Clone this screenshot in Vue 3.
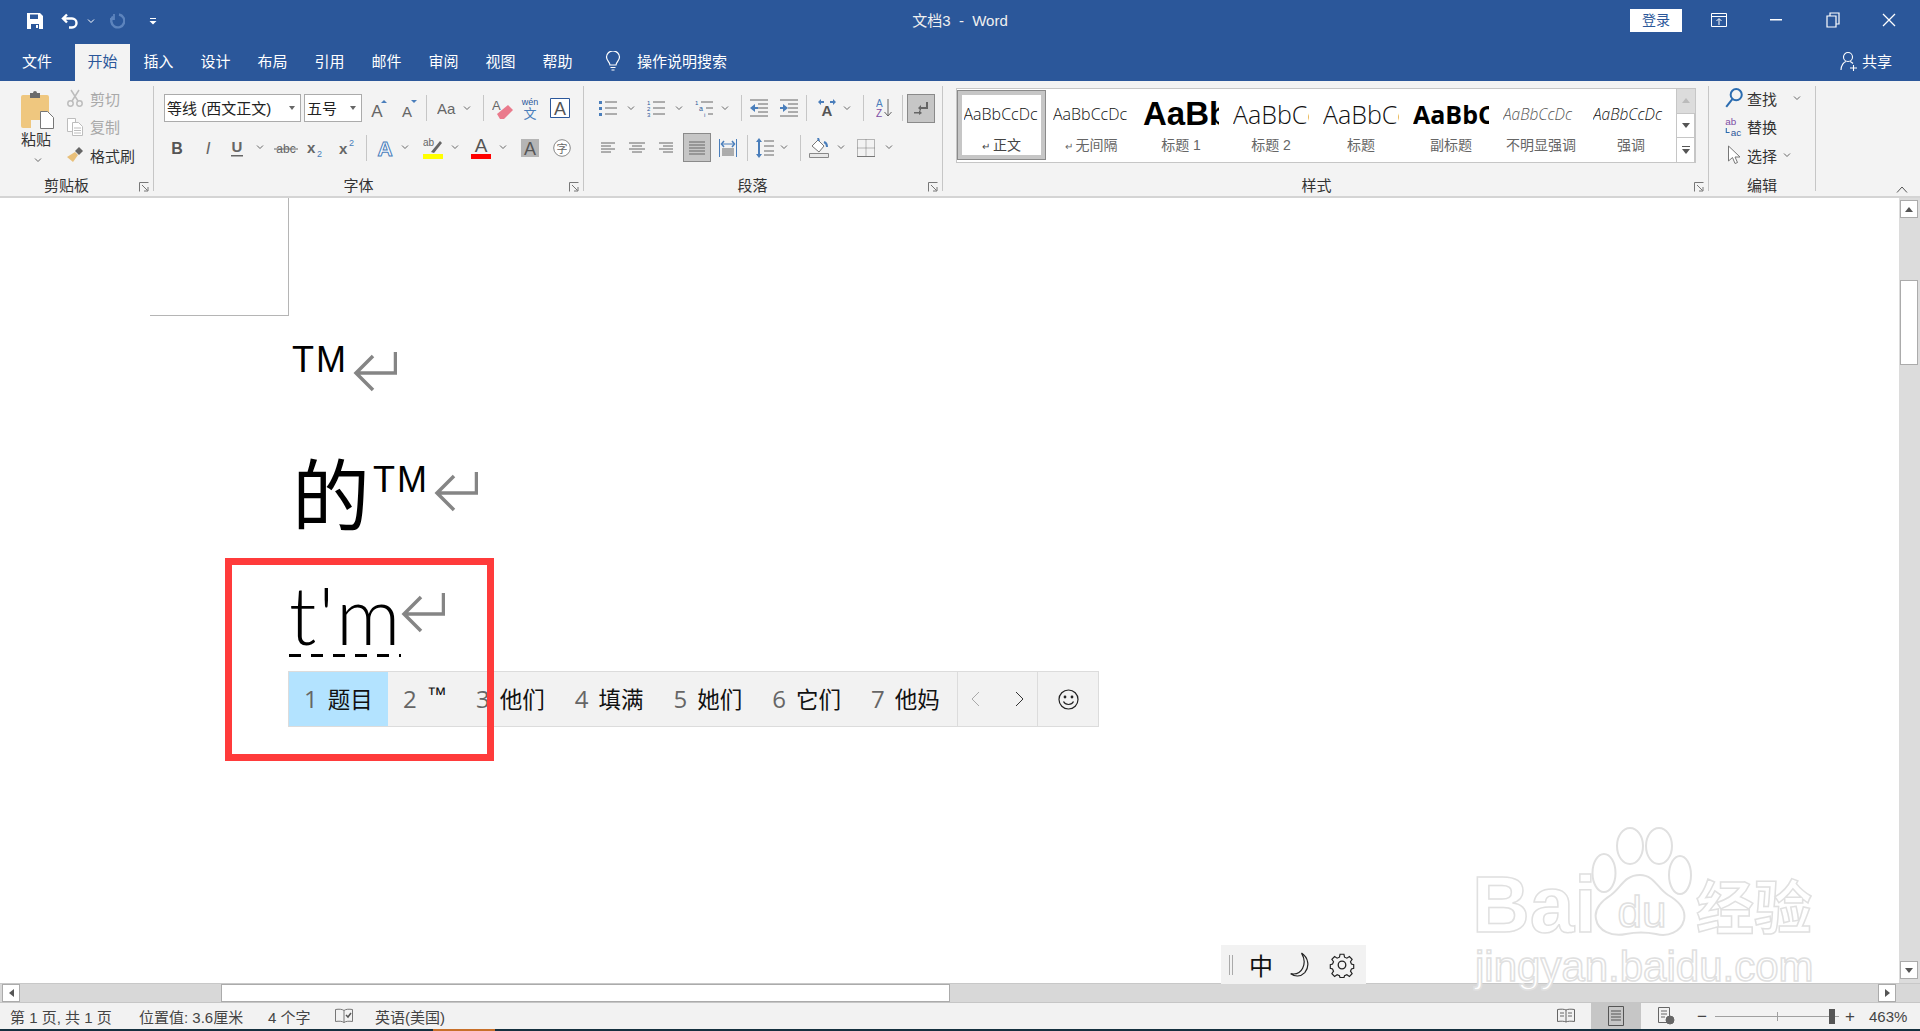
<template>
  <div class="app">
    <!-- title bar -->
    <header class="titlebar">
      <div class="qat">
        <svg width="16" height="16" viewBox="0 0 16 16"><path d="M0 0h13l3 3v13H0z" fill="#fff"/><path d="M3 1.500h8V6H3zM4 11h8v5H4z" fill="#2b579a"/><path d="M9 12h2v3H9z" fill="#fff"/></svg>
        <svg class="ml18" width="18" height="16" viewBox="0 0 18 16" fill="none" stroke="#fff" stroke-width="2.400"><path d="M6 1.500L2 5.500l4 4M2 5.500h9a4.500 4.500 0 0 1 0 9H8"/></svg>
        <svg class="chev white ml8" viewBox="0 0 8 5"><path d="M1 .5l3 3 3-3"/></svg>
        <svg class="ml14" width="16" height="16" viewBox="0 0 16 16" fill="none" stroke="#5d84bd" stroke-width="2.400"><path d="M10 1.500A6.500 6.500 0 1 1 4 3.500"/><path d="M5 1v5H1" stroke-width="1.800"/></svg>
        <svg class="ml24" width="8" height="8" viewBox="0 0 8 8"><path d="M1 1h6v1H1zM.5 4h7L4 7.500z" fill="#fff"/></svg>
      </div>
      <div class="doc-title">文档3&nbsp;&nbsp;-&nbsp;&nbsp;Word</div>
      <div class="winctl">
        <button class="login">登录</button>
        <svg class="ml28" width="18" height="16" viewBox="0 0 18 16" fill="none" stroke="#fff"><path d="M1.500 1.500h15v13h-15zM1.500 4.500h15M9 13V7M6.500 9L9 6.500 11.500 9"/></svg>
        <svg class="ml42" width="12" height="2" viewBox="0 0 12 2"><path d="M0 0h12v1.500H0z" fill="#fff"/></svg>
        <svg class="ml44" width="14" height="16" viewBox="0 0 14 16" fill="none" stroke="#fff" stroke-width="1.200"><path d="M1 4h9v11H1zM4 4V1h9v11h-3"/></svg>
        <svg class="ml42" width="14" height="14" viewBox="0 0 14 14" stroke="#fff" stroke-width="1.300"><path d="M1 1l12 12M13 1L1 13"/></svg>
      </div>
    </header>

    <!-- tabs -->
    <nav class="tabs">
      <span class="tab file">文件</span>
      <span v-for="t in tabs" :key="t" class="tab" :class="{ active: t === '开始' }">{{ t }}</span>
      <span class="tell">
        <svg width="16" height="20" viewBox="0 0 16 20" fill="none" stroke="#fff" stroke-width="1.200"><path d="M5 14c0-3-3.500-4-3.500-8a6.500 6 0 0 1 13 0c0 4-3.500 5-3.500 8zM5.500 16.500h5M6.500 19h3"/></svg>
        操作说明搜索
      </span>
      <span class="share">
        <svg width="18" height="20" viewBox="0 0 18 20" fill="none" stroke="#fff" stroke-width="1.100"><circle cx="8" cy="6" r="4.500"/><path d="M1 19c0-5 3-8 5-8.500M10 10.500c1 .3 2 1 3 2M10 17h7M13.500 14v6"/></svg>
        共享
      </span>
    </nav>

    <!-- ribbon -->
    <section class="ribbon">
      <div class="group clipboard">
        <div class="clip-body">
          <div class="paste">
            <svg width="34" height="39" viewBox="0 0 34 39"><path d="M2 5h24a2 2 0 0 1 2 2v23H10v8H2a2 2 0 0 1-2-2V7a2 2 0 0 1 2-2z" fill="#efc77f"/><path d="M9 3h3a2 2 0 0 1 4 0h3v5H9z" fill="#6b6b6b"/><path d="M19.500 21.500h7l6 6v11h-13z" fill="#fff" stroke="#777"/></svg>
            <span class="paste-label">粘贴</span>
            <svg class="chev" viewBox="0 0 8 5"><path d="M1 .5l3 3 3-3"/></svg>
          </div>
          <ul class="clip-list">
            <li class="dim">
              <svg width="16" height="18" viewBox="0 0 16 18" fill="none" stroke="#bdbdbd" stroke-width="1.500"><circle cx="3.500" cy="14.500" r="2.700"/><circle cx="12.500" cy="14.500" r="2.700"/><path d="M5 12L12 1M11 12L4 1"/></svg>
              剪切
            </li>
            <li class="dim">
              <svg width="16" height="18" viewBox="0 0 16 18" fill="#fff" stroke="#bdbdbd"><path d="M.5 .5h8v13h-8z"/><path d="M5.500 4.500h6l4 4v9h-10z"/><path d="M7 10h7M7 12.500h7M7 15h7"/></svg>
              复制
            </li>
            <li>
              <svg width="16" height="16" viewBox="0 0 16 16"><path d="M8 5l3 3-5 7-6-5z" fill="#e9c07a"/><path d="M8 4l4-4 4 4-4 4z" fill="#666"/></svg>
              格式刷
            </li>
          </ul>
        </div>
        <span class="glabel">剪贴板</span>
        <svg class="launcher" viewBox="0 0 10 10" fill="none" stroke="#777"><path d="M.5 9.500v-9h9"/><path d="M3 3l5.500 5.500M9 5v4H5"/></svg>
      </div>

      <div class="group font">
        <div class="row">
          <div class="combo name"><span>等线 (西文正文)</span><i class="tri"></i></div>
          <div class="combo size ml3"><span>五号</span><i class="tri"></i></div>
          <svg class="ml8" width="18" height="22" viewBox="0 0 18 22"><text x="7" y="20" text-anchor="middle" font-size="17" fill="#666">A</text><path d="M14 3l3 3h-6z" fill="#4a7ebb"/></svg>
          <svg class="ml12" width="18" height="22" viewBox="0 0 18 22"><text x="7" y="20" text-anchor="middle" font-size="15" fill="#666">A</text><path d="M14 6l3-3h-6z" fill="#4a7ebb"/></svg>
          <i class="vsep ml8"></i>
          <svg class="ml10" width="20" height="20" viewBox="0 0 20 20"><text x="0" y="16" font-size="15" fill="#666">Aa</text></svg>
          <svg class="chev ml6" viewBox="0 0 8 5"><path d="M1 .5l3 3 3-3"/></svg>
          <i class="vsep ml12"></i>
          <svg class="ml8" width="22" height="24" viewBox="0 0 22 24"><text x="0" y="14" font-size="13" fill="#666">A</text><path d="M5 18l11-9 5 5-9 9H8z" fill="#ea7a8c"/></svg>
          <svg class="ml6" width="20" height="24" viewBox="0 0 20 24"><text x="10" y="9" text-anchor="middle" font-size="9" fill="#2b579a">wén</text><text x="10" y="22" text-anchor="middle" font-size="13" fill="#4a7ebb">文</text></svg>
          <svg class="ml10" width="20" height="20" viewBox="0 0 20 20"><path d="M.5 .5h19v19H.5z" fill="#fff" stroke="#2b579a"/><text x="10" y="17" text-anchor="middle" font-size="18" fill="#555">A</text></svg>
        </div>
        <div class="row second">
          <svg class="ml6" width="14" height="20" viewBox="0 0 14 20"><text x="7" y="16" text-anchor="middle" font-size="16" font-weight="700" fill="#555">B</text></svg>
          <svg class="ml18" width="12" height="20" viewBox="0 0 12 20"><text x="6" y="16" text-anchor="middle" font-size="17" font-style="italic" fill="#666">I</text></svg>
          <svg class="ml16" width="14" height="22" viewBox="0 0 14 22"><text x="7" y="15" text-anchor="middle" font-size="15" font-weight="700" fill="#666">U</text><path d="M1 18h12v1.500H1z" fill="#666"/></svg>
          <svg class="chev ml12" viewBox="0 0 8 5"><path d="M1 .5l3 3 3-3"/></svg>
          <svg class="ml10" width="24" height="20" viewBox="0 0 24 20"><text x="12" y="15" text-anchor="middle" font-size="12" fill="#666">abc</text><path d="M0 11h24" stroke="#666"/></svg>
          <svg class="ml8" width="20" height="22" viewBox="0 0 20 22"><text x="1" y="16" font-size="15" font-weight="700" fill="#666">x</text><text x="11" y="20" font-size="9" fill="#4a7ebb">2</text></svg>
          <svg class="ml12" width="20" height="22" viewBox="0 0 20 22"><text x="1" y="17" font-size="15" font-weight="700" fill="#666">x</text><text x="11" y="9" font-size="9" fill="#4a7ebb">2</text></svg>
          <i class="vsep ml8"></i>
          <svg class="ml8" width="20" height="22" viewBox="0 0 20 22"><text x="10" y="19" text-anchor="middle" font-size="21" font-weight="700" fill="#fff" stroke="#4a7ebb">A</text></svg>
          <svg class="chev ml6" viewBox="0 0 8 5"><path d="M1 .5l3 3 3-3"/></svg>
          <svg class="ml14" width="20" height="24" viewBox="0 0 20 24"><text x="0" y="10" font-size="10" fill="#666">ab</text><path d="M8 16L17 5l2 2-8 10z" fill="#666"/><path d="M0 18h20v5H0z" fill="#ff0"/></svg>
          <svg class="chev ml8" viewBox="0 0 8 5"><path d="M1 .5l3 3 3-3"/></svg>
          <svg class="ml12" width="20" height="24" viewBox="0 0 20 24"><text x="10" y="16" text-anchor="middle" font-size="19" fill="#555">A</text><path d="M0 18h20v5H0z" fill="#f00"/></svg>
          <svg class="chev ml8" viewBox="0 0 8 5"><path d="M1 .5l3 3 3-3"/></svg>
          <svg class="ml14" width="18" height="20" viewBox="0 0 18 20"><path d="M0 1h18v18H0z" fill="#b5b5b5"/><text x="9" y="17" text-anchor="middle" font-size="18" fill="#555">A</text></svg>
          <svg class="ml14" width="18" height="20" viewBox="0 0 18 20"><circle cx="9" cy="10" r="8.300" fill="#fff" stroke="#888"/><text x="9" y="14.500" text-anchor="middle" font-size="11" fill="#666">字</text></svg>
        </div>
        <span class="glabel">字体</span>
        <svg class="launcher" viewBox="0 0 10 10" fill="none" stroke="#777"><path d="M.5 9.500v-9h9"/><path d="M3 3l5.500 5.500M9 5v4H5"/></svg>
      </div>

      <div class="group para">
        <div class="row">
          <svg width="18" height="18" viewBox="0 0 18 18"><path d="M0 2h3v3H0zM0 8h3v3H0zM0 14h3v3H0z" fill="#4a7ebb"/><path d="M6 3h12M6 9h12M6 15h12" stroke="#666"/></svg>
          <svg class="chev ml10" viewBox="0 0 8 5"><path d="M1 .5l3 3 3-3"/></svg>
          <svg class="ml12" width="18" height="18" viewBox="0 0 18 18"><text x="0" y="6" font-size="6" fill="#2b579a">1</text><text x="0" y="12" font-size="6" fill="#2b579a">2</text><text x="0" y="18" font-size="6" fill="#2b579a">3</text><path d="M6 3h12M6 9h12M6 15h12" stroke="#666"/></svg>
          <svg class="chev ml10" viewBox="0 0 8 5"><path d="M1 .5l3 3 3-3"/></svg>
          <svg class="ml12" width="18" height="18" viewBox="0 0 18 18"><text x="0" y="6" font-size="6" fill="#2b579a">1</text><text x="4" y="12" font-size="7" fill="#2b579a">a</text><text x="9" y="18" font-size="6" fill="#2b579a">i</text><path d="M6 3h12M11 9h7M13 15h5" stroke="#666"/></svg>
          <svg class="chev ml8" viewBox="0 0 8 5"><path d="M1 .5l3 3 3-3"/></svg>
          <i class="vsep ml12"></i>
          <svg class="ml8" width="18" height="18" viewBox="0 0 18 18"><path d="M0 1h18M8 5h10M8 9h10M8 13h10M0 17h18" stroke="#666"/><path d="M0 9l5-4v3h3v2H5v3z" fill="#4a7ebb"/></svg>
          <svg class="ml12" width="18" height="18" viewBox="0 0 18 18"><path d="M0 1h18M8 5h10M8 9h10M8 13h10M0 17h18" stroke="#666"/><path d="M8 9L3 5v3H0v2h3v3z" fill="#4a7ebb"/></svg>
          <i class="vsep ml8"></i>
          <svg class="ml10" width="20" height="18" viewBox="0 0 20 18"><text x="10" y="17" text-anchor="middle" font-size="15" font-weight="700" fill="#555">A</text><path d="M1 3l3-3v2h3v2H4v2zM19 3l-3-3v2h-3v2h3v2z" fill="#4a7ebb"/></svg>
          <svg class="chev ml6" viewBox="0 0 8 5"><path d="M1 .5l3 3 3-3"/></svg>
          <i class="vsep ml12"></i>
          <svg class="ml12" width="16" height="20" viewBox="0 0 16 20"><text x="0" y="9" font-size="10" fill="#4a7ebb">A</text><text x="0" y="19" font-size="10" fill="#7d4ea5">Z</text><path d="M12 1v17M8.500 14l3.500 4 3.500-4" fill="none" stroke="#666"/></svg>
          <i class="vsep ml10"></i>
          <div class="on ml4">
            <svg width="16" height="16" viewBox="0 0 16 16"><path d="M14 2v6H6" fill="none" stroke="#666" stroke-width="2"/><path d="M8 5L5 8l3 3zM1 12h5v-2l3 3-3 2v-1.500H1z" fill="#666"/></svg>
          </div>
        </div>
        <div class="row second">
          <svg class="ml2" width="14" height="12" viewBox="0 0 14 12" stroke="#666"><path d="M0 1h14M0 4h10M0 7h14M0 10h10"/></svg>
          <svg class="ml14" width="16" height="12" viewBox="0 0 16 12" stroke="#666"><path d="M0 1h16M3 4h10M0 7h16M3 10h10"/></svg>
          <svg class="ml14" width="14" height="12" viewBox="0 0 14 12" stroke="#666"><path d="M0 1h14M4 4h10M0 7h14M4 10h10"/></svg>
          <div class="on ml10">
            <svg width="16" height="14" viewBox="0 0 16 14" stroke="#666"><path d="M0 1h16M0 4h16M0 7h16M0 10h16M0 13h16"/></svg>
          </div>
          <svg class="ml8" width="18" height="18" viewBox="0 0 18 18" fill="none"><path d="M.5 0v18M17.500 0v18M3 5h12" stroke="#4a7ebb"/><path d="M5 2L2.500 5 5 8M13 2l2.500 3-2.500 3" stroke="#4a7ebb" stroke-width="1.500"/><path d="M3 10h12M3 12h12M3 14h12M3 16h12" stroke="#666"/></svg>
          <i class="vsep ml10"></i>
          <svg class="ml8" width="18" height="20" viewBox="0 0 18 20"><path d="M3 0l3 4H4v12h2l-3 4-3-4h2V4H0z" fill="#4a7ebb"/><path d="M8 3h10M8 8h10M8 13h10M8 17h10" stroke="#666"/></svg>
          <svg class="chev ml6" viewBox="0 0 8 5"><path d="M1 .5l3 3 3-3"/></svg>
          <i class="vsep ml12"></i>
          <svg class="ml8" width="20" height="20" viewBox="0 0 20 20"><path d="M3 8l6-6 6 6-5 6z" fill="#fff" stroke="#777"/><path d="M9 0l1 3M15 4c3 1 3 3 3 5" stroke="#4a7ebb" stroke-width="2" fill="none"/><path d="M.5 15.500h19v4H.5z" fill="#e8e8e8" stroke="#888"/></svg>
          <svg class="chev ml8" viewBox="0 0 8 5"><path d="M1 .5l3 3 3-3"/></svg>
          <svg class="ml12" width="18" height="18" viewBox="0 0 18 18" fill="none" stroke="#777" stroke-dasharray="1 1"><path d="M.5 .5h17v17H.5zM9 .5v17M.5 9h17"/><path d="M0 17.500h18" stroke-dasharray="none"/></svg>
          <svg class="chev ml10" viewBox="0 0 8 5"><path d="M1 .5l3 3 3-3"/></svg>
        </div>
        <span class="glabel">段落</span>
        <svg class="launcher" viewBox="0 0 10 10" fill="none" stroke="#777"><path d="M.5 9.500v-9h9"/><path d="M3 3l5.500 5.500M9 5v4H5"/></svg>
      </div>

      <div class="group styles">
        <div class="gallery">
          <div v-for="(s, i) in styleItems" :key="s.label" class="style-item" :class="{ selected: i === 0 }">
            <div class="preview" :class="s.cls">AaBbCcDc</div>
            <div class="style-label"><span v-if="s.mark" class="mark">↵</span>{{ s.label }}</div>
          </div>
          <div class="gal-scroll">
            <div class="gs up"><i class="t-up"></i></div>
            <div class="gs"><i class="t-down"></i></div>
            <div class="gs more"><i class="t-bar"></i><i class="t-down"></i></div>
          </div>
        </div>
        <span class="glabel">样式</span>
        <svg class="launcher" viewBox="0 0 10 10" fill="none" stroke="#777"><path d="M.5 9.500v-9h9"/><path d="M3 3l5.500 5.500M9 5v4H5"/></svg>
      </div>

      <div class="group edit">
        <ul class="edit-list">
          <li>
            <svg width="18" height="20" viewBox="0 0 16 18" fill="none" stroke="#2b6cb0" stroke-width="1.800"><circle cx="10" cy="6" r="5"/><path d="M6.500 10L1 17"/></svg>
            查找
            <svg class="chev ml12" viewBox="0 0 8 5"><path d="M1 .5l3 3 3-3"/></svg>
          </li>
          <li>
            <svg width="18" height="22" viewBox="0 0 16 20"><text x="0" y="8" font-size="9" fill="#7d4ea5">ab</text><text x="5" y="18" font-size="9" fill="#2b579a">ac</text><path d="M1 11v4h3" fill="none" stroke="#2b6cb0"/></svg>
            替换
          </li>
          <li>
            <svg width="18" height="20" viewBox="-2 0 18 20" fill="#fff" stroke="#777"><path d="M1.500 1v15l4-3.500L8 18.500l2.500-1L8 12h5z"/></svg>
            选择
            <svg class="chev ml2" viewBox="0 0 8 5"><path d="M1 .5l3 3 3-3"/></svg>
          </li>
        </ul>
        <span class="glabel">编辑</span>
      </div>

      <svg class="collapse" width="12" height="7" viewBox="0 0 12 7" fill="none" stroke="#555"><path d="M1 6.500l5-5.500 5 5.500"/></svg>
    </section>

    <!-- document -->
    <div class="workspace">
      <main class="doc">
        <div class="crop-mark"></div>

        <div class="line l1">
          <span class="tm">TM</span>
          <svg class="enter" viewBox="0 0 44 40" fill="none" stroke="#858585" stroke-width="3.500"><path d="M42.500 0v21H3M20 4L3 21l17 17"/></svg>
        </div>

        <div class="line l2">
          <span class="han">的</span>
          <span class="tm">TM</span>
          <svg class="enter" viewBox="0 0 44 40" fill="none" stroke="#858585" stroke-width="3.500"><path d="M42.500 0v21H3M20 4L3 21l17 17"/></svg>
        </div>

        <div class="line l3">
          <span class="composing">t'm</span>
          <svg class="enter" viewBox="0 0 44 40" fill="none" stroke="#858585" stroke-width="3.500"><path d="M42.500 0v21H3M20 4L3 21l17 17"/></svg>
        </div>

        <!-- IME candidate bar -->
        <div class="candidates">
          <div v-for="(c, i) in candidates" :key="c" class="cand" :class="{ current: i === 0, sym: c === '™' }">
            <span class="num">{{ i + 1 }}</span><span class="word">{{ c }}</span>
          </div>
          <div class="pager">
            <svg width="9" height="16" viewBox="0 0 9 16" fill="none" stroke="#aaa"><path d="M8 1L1 8l7 7"/></svg>
            <svg width="9" height="16" viewBox="0 0 9 16" fill="none" stroke="#333"><path d="M1 1l7 7-7 7"/></svg>
          </div>
          <div class="emoji">
            <svg width="21" height="21" viewBox="0 0 21 21" fill="none" stroke="#222" stroke-width="1.200"><circle cx="10.500" cy="10.500" r="9.500"/><circle cx="7" cy="8" r=".800" fill="#222"/><circle cx="14" cy="8" r=".800" fill="#222"/><path d="M5.500 12.500c2 4 8 4 10 0"/></svg>
          </div>
        </div>

        <div class="red-box"></div>
      </main>

      <aside class="vscroll">
        <div class="sbtn"><i class="t-up"></i></div>
        <div class="vthumb"></div>
        <div class="sbtn bottom"><i class="t-down"></i></div>
      </aside>
    </div>

    <div class="hscroll">
      <div class="sbtn h first"><i class="t-left"></i></div>
      <div class="hthumb"></div>
      <div class="sbtn h last"><i class="t-right"></i></div>
    </div>

    <footer class="status">
      <span class="st page">第 1 页, 共 1 页</span>
      <span class="st pos">位置值: 3.6厘米</span>
      <span class="st count">4 个字</span>
      <svg class="proof" width="18" height="16" viewBox="0 0 18 16" fill="none" stroke="#777"><path d="M9 2.500C7 1 4 1 .5 1.500v12c3.500-.5 6.500-.5 8.500 1 2-1.500 5-1.500 8.500-1v-12c-3.500-.5-6.500-.5-8.500 1zM9 2.500v12"/><path d="M11 7l2 2 3-4" stroke="#555" stroke-width="1.500"/></svg>
      <span class="st lang">英语(美国)</span>
      <div class="st-right">
        <svg width="18" height="16" viewBox="0 0 18 16" fill="none" stroke="#666"><path d="M9 2C7 1 4 1 .5 1.500v12c3.500-.5 6.500-.5 8.500.5 2-1 5-1 8.500-.5v-12C14 1 11 1 9 2zM9 2v12M3 5h4M3 8h4M11 5h4M11 8h4"/></svg>
        <div class="view-on ml16">
          <svg width="16" height="20" viewBox="0 0 16 20" fill="none" stroke="#555"><path d="M.5 .5h15v19H.5zM3 5h10M3 8h10M3 11h10M3 14h10"/></svg>
        </div>
        <svg class="ml16" width="18" height="18" viewBox="0 0 18 18" fill="none" stroke="#666"><path d="M1.500 .5h11v15h-11zM4 4h6M4 7h6M4 10h4"/><circle cx="13" cy="13" r="4" fill="#666"/></svg>
        <span class="zoom-btn ml22">−</span>
        <div class="slider ml8"><i class="tick"></i><i class="knob"></i></div>
        <span class="zoom-btn ml6">+</span>
        <span class="pct ml14">463%</span>
      </div>
    </footer>
    <div class="taskline"></div>

    <!-- floating language bar and site watermark over the capture -->
    <div class="ime-bar">
      <i class="grip"></i>
      <span class="ime-zh">中</span>
      <svg width="24" height="26" viewBox="0 0 21 24" fill="none" stroke="#222" stroke-width="1.100"><path d="M11 1c6 4 8 12 3 18-4 4-9 4-13 1 5 1 9-1 11-5s2-9-1-14z"/></svg>
      <svg width="26" height="26" viewBox="0 0 24 24" fill="none" stroke="#222" stroke-width="1.200"><circle cx="12" cy="12" r="3.500"/><path d="M10 1h4l.6 3 2.400 1 2.600-1.700 2.800 2.800L20.700 8.700l1 2.300 2.300.6v3.800l-2.300.6-1 2.300 1.700 2.600-2.800 2.800-2.600-1.700-2.400 1-.6 2h-4l-.6-2-2.400-1-2.600 1.700-2.800-2.800 1.700-2.600-1-2.300L0 15.400v-3.800l2.300-.6 1-2.300L1.600 6.100l2.800-2.800L7 5l2.400-1z" transform="translate(1.200 1.200) scale(.9)"/></svg>
    </div>

    <div class="watermark">
      <div class="wm-top">
        <span class="wm-bai">Bai</span>
        <svg class="wm-paw" width="103" height="110" viewBox="0 0 103 110" fill="#fff" stroke="#e0e0e0" stroke-width="2">
          <ellipse cx="14" cy="46" rx="11.500" ry="19"/>
          <ellipse cx="40" cy="19" rx="13" ry="18"/>
          <ellipse cx="69" cy="19" rx="13" ry="18"/>
          <ellipse cx="90" cy="48" rx="11" ry="19"/>
          <path d="M50 48c14 0 18 14 28 20 14 8 18 16 16 25-3 12-16 17-28 14-10-2-20-2-30 0-14 3-28-3-30-15-2-9 4-17 15-24 10-7 13-20 29-20z"/>
          <text x="52" y="100" text-anchor="middle" font-size="44" stroke-width="1.500">du</text>
        </svg>
        <span class="wm-cn">经验</span>
      </div>
      <div class="wm-url">jingyan.baidu.com</div>
    </div>
  </div>
</template>

<script setup>
const tabs = ['开始', '插入', '设计', '布局', '引用', '邮件', '审阅', '视图', '帮助']

const styleItems = [
  { label: '正文', cls: 'normal', mark: true },
  { label: '无间隔', cls: 'normal', mark: true },
  { label: '标题 1', cls: 'h1' },
  { label: '标题 2', cls: 'h2' },
  { label: '标题', cls: 'h2' },
  { label: '副标题', cls: 'sub' },
  { label: '不明显强调', cls: 'subtle' },
  { label: '强调', cls: 'em' }
]

const candidates = ['题目', '™', '他们', '填满', '她们', '它们', '他妈']
</script>

<style>
html,
body {
  margin: 0;
  background: #fff;
}
</style>

<style scoped>
.app {
  position: relative;
  display: flex;
  flex-direction: column;
  width: 1920px;
  height: 1031px;
  overflow: hidden;
  font-family: "Liberation Sans", "Noto Sans CJK SC", sans-serif;
  font-size: 14px;
  color: #333;
}

svg text {
  font-family: "Liberation Sans", "Noto Sans CJK SC", sans-serif;
}

.ml2 { margin-left: 2px; }
.ml3 { margin-left: 3px; }
.ml4 { margin-left: 4px; }
.ml6 { margin-left: 6px; }
.ml8 { margin-left: 8px; }
.ml10 { margin-left: 10px; }
.ml12 { margin-left: 12px; }
.ml14 { margin-left: 14px; }
.ml16 { margin-left: 16px; }
.ml18 { margin-left: 18px; }
.ml22 { margin-left: 22px; }
.ml24 { margin-left: 24px; }
.ml28 { margin-left: 28px; }
.ml42 { margin-left: 42px; }
.ml44 { margin-left: 44px; }

.chev {
  flex: none;
  width: 8px;
  height: 5px;
  fill: none;
  stroke: #666;
}
.chev.white {
  stroke: #fff;
}

/* title bar */
.titlebar {
  display: grid;
  grid-template-columns: 1fr auto 1fr;
  align-items: center;
  height: 44px;
  padding-bottom: 5px;
  box-sizing: border-box;
  background: #2b579a;
  color: #fff;
}
.qat {
  display: flex;
  align-items: center;
  padding: 3px 0 0 27px;
}
.doc-title {
  font-size: 15px;
  color: #f0f0f0;
}
.winctl {
  display: flex;
  align-items: center;
  justify-content: flex-end;
  padding: 1px 24px 0 0;
}
.login {
  width: 52px;
  height: 23px;
  padding: 0 0 2px;
  border: 0;
  background: #fff;
  color: #2b579a;
  font: 14px "Liberation Sans", "Noto Sans CJK SC", sans-serif;
}

/* tabs */
.tabs {
  display: flex;
  align-items: stretch;
  height: 37px;
  background: #2b579a;
  color: #fff;
  font-size: 15px;
}
.tab {
  display: flex;
  align-items: center;
  justify-content: center;
  width: 57px;
  padding-bottom: 4px;
  box-sizing: border-box;
}
.tab.file {
  width: 75px;
  padding-right: 1px;
}
.tab.active {
  width: 55px;
  background: #f3f3f3;
  color: #2b579a;
}
.tell,
.share {
  display: flex;
  align-items: center;
  padding-bottom: 4px;
}
.tell {
  gap: 16px;
  margin-left: 19px;
}
.share {
  gap: 4px;
  margin-left: auto;
  padding-right: 28px;
}

/* ribbon */
.ribbon {
  position: relative;
  display: flex;
  flex: none;
  height: 117px;
  box-sizing: border-box;
  border-bottom: 2px solid #d4d4d4;
  background: #f3f3f3;
}
.group {
  position: relative;
  display: flex;
  flex-direction: column;
  flex: none;
  box-sizing: border-box;
  height: 105px;
  margin-top: 5px;
  padding-top: 8px;
  border-right: 1px solid #c6c6c6;
}
.clipboard { width: 154px; }
.font { width: 430px; padding-left: 10px; }
.para { width: 359px; padding-left: 15px; }
.styles { width: 766px; padding: 2px 0 0 13px; }
.edit { width: 107px; padding-top: 0; }
.glabel {
  position: absolute;
  left: 0;
  right: 0;
  bottom: -1px;
  height: 12px;
  line-height: 12px;
  text-align: center;
  font-size: 15px;
  color: #333;
}
.clipboard .glabel { right: 20px; }
.font .glabel { right: 20px; }
.para .glabel { right: 21px; }
.styles .glabel { right: 18px; }
.launcher {
  position: absolute;
  right: 4px;
  bottom: -1px;
  width: 10px;
  height: 10px;
}

.clip-body {
  display: flex;
  margin-top: -9px;
}
.paste {
  display: flex;
  flex-direction: column;
  align-items: center;
  width: 36px;
  margin: 5px 0 0 20px;
}
.paste-label {
  margin: 1px 4px 0 0;
  font-size: 15px;
  line-height: 20px;
}
.paste .chev {
  margin-top: 8px;
}
.clip-list,
.edit-list {
  margin: 0;
  padding: 0;
  list-style: none;
}
.clip-list {
  margin-left: 11px;
}
.clip-list li,
.edit-list li {
  display: flex;
  align-items: center;
  gap: 7px;
  height: 28.500px;
  font-size: 15px;
  position: relative;
  top: -1px;
}
.clip-list .dim {
  color: #a9a9a9;
}

.row {
  display: flex;
  align-items: center;
  height: 28px;
}
.row.second {
  height: 29px;
  margin-top: 11px;
}
.row svg {
  flex: none;
}
.vsep {
  flex: none;
  width: 1px;
  height: 26px;
  background: #c6c6c6;
}
.combo {
  position: relative;
  display: flex;
  align-items: center;
  flex: none;
  box-sizing: border-box;
  height: 28px;
  padding: 0 0 2px 2px;
  border: 1px solid #ababab;
  background: #fff;
  font-size: 15px;
  color: #222;
  white-space: nowrap;
}
.combo.name { width: 137px; }
.combo.size { width: 58px; }
.tri {
  position: absolute;
  right: 5px;
  top: 11px;
  border: 3.500px solid transparent;
  border-top: 4px solid #666;
}
.on {
  display: flex;
  align-items: center;
  justify-content: center;
  flex: none;
  box-sizing: border-box;
  width: 28px;
  height: 29px;
  border: 1px solid #8a8a8a;
  background: #c6c6c6;
}

/* styles gallery */
.gallery {
  display: flex;
  width: 740px;
  height: 75px;
  box-sizing: border-box;
  border: 1px solid #c6c6c6;
  border-right-width: 2px;
  background: #fff;
}
.style-item {
  flex: none;
  display: flex;
  flex-direction: column;
  align-items: center;
  box-sizing: border-box;
  width: 90px;
  height: 70px;
  margin-top: 1px;
  padding-top: 5px;
}
.style-item:first-child {
  width: 89px;
}
.style-item.selected {
  border: 5px solid #c6c6c6;
  outline: 1px solid #8a8a8a;
  outline-offset: -1px;
  padding-top: 0;
}
.preview {
  flex: none;
  width: 76px;
  height: 40px;
  overflow: hidden;
  line-height: 38px;
  white-space: nowrap;
  font-family: "Open Sans", "Liberation Sans", sans-serif;
  font-size: 16px;
  font-weight: 300;
  color: #111;
}
.preview.h1 {
  font-family: "Liberation Sans", sans-serif;
  font-size: 33px;
  font-weight: 700;
  color: #000;
}
.preview.h2 {
  font-size: 25px;
}
.preview.sub {
  font-size: 25px;
  font-weight: 700;
  color: #000;
}
.preview.subtle {
  font-style: italic;
  font-size: 15.500px;
  color: #555;
}
.preview.em {
  font-style: italic;
  font-size: 15.500px;
}
.style-label {
  font-size: 14px;
  line-height: 20px;
  color: #666;
  white-space: nowrap;
}
.style-item.selected .style-label {
  color: #444;
}
.mark {
  margin-right: 3px;
  font-size: 10px;
}
.gal-scroll {
  display: flex;
  flex-direction: column;
  flex: none;
  width: 19px;
}
.gs {
  display: flex;
  flex-direction: column;
  align-items: center;
  justify-content: center;
  gap: 2px;
  flex: 1;
  border-bottom: 1px solid #c6c6c6;
  border-left: 1px solid #c6c6c6;
}
.gs:last-child {
  border-bottom: 0;
}
.gs.up {
  background: #dcdcdc;
}
.t-up,
.t-down,
.t-left,
.t-right {
  display: block;
  width: 0;
  height: 0;
  border: 4px solid transparent;
}
.t-up { border-top: 0; border-bottom: 5px solid #555; }
.gs .t-up { border-bottom-color: #bbb; }
.t-down { border-bottom: 0; border-top: 5px solid #555; }
.t-left { border-left: 0; border-right: 5px solid #555; }
.t-right { border-right: 0; border-left: 5px solid #555; }
.t-bar {
  display: block;
  width: 8px;
  height: 1px;
  background: #555;
}

.edit-list {
  margin: -1px 0 0 16px;
}
.edit-list li {
  gap: 4px;
  color: #333;
}
.edit-list svg:first-child {
  flex: none;
}

.collapse {
  position: absolute;
  right: 12px;
  bottom: 3px;
}

/* document */
.workspace {
  display: flex;
  flex: 1;
  min-height: 0;
}
.doc {
  position: relative;
  flex: 1;
  background: #fff;
}
.crop-mark {
  width: 138px;
  height: 117px;
  margin-left: 150px;
  border-right: 1px solid #b5b5b5;
  border-bottom: 1px solid #b5b5b5;
}
.line {
  display: flex;
  align-items: flex-start;
  margin-left: 292px;
  color: #000;
}
.l1 { height: 112px; margin-top: 26px; }
.l2 { height: 122px; }
.l3 { margin-left: 289px; }
.tm {
  font-size: 36px;
  letter-spacing: 2px;
  line-height: 36px;
}
.enter {
  flex: none;
  width: 44px;
  height: 40px;
}
.l1 .enter {
  margin: 10px 0 0 5px;
}
.han {
  width: 81px;
  margin-top: -3px;
  font-family: "Noto Sans CJK SC", sans-serif;
  font-size: 78px;
  line-height: 80px;
}
.l2 .tm {
  margin-top: 8px;
}
.l2 .enter {
  margin: 18px 0 0 5px;
}
.composing {
  position: relative;
  font-family: Lato, "Open Sans", sans-serif;
  font-size: 80px;
  font-weight: 300;
  letter-spacing: 2px;
  line-height: 76px;
}
.composing::after {
  content: "";
  position: absolute;
  left: 0;
  top: 78px;
  width: 112px;
  height: 3px;
  background: repeating-linear-gradient(90deg, #000 0 12px, transparent 12px 22px);
}
.l3 .enter {
  margin: 17px 0 0 -1px;
}

.candidates {
  position: absolute;
  left: 288px;
  top: 473px;
  display: flex;
  box-sizing: border-box;
  width: 811px;
  height: 56px;
  border: 1px solid #dcdcdc;
  background: #f2f2f2;
}
.cand {
  display: flex;
  align-items: center;
  gap: 10px;
  flex: none;
  height: 100%;
  padding: 0 15px;
}
.cand.current {
  width: 99px;
  box-sizing: border-box;
  background: #b3e3ff;
}
.cand.sym {
  width: 73px;
  box-sizing: border-box;
}
.num {
  font-family: "Open Sans", sans-serif;
  font-size: 24px;
  color: #666;
  position: relative;
  top: -1px;
}
.word {
  font-family: "Noto Sans CJK SC", sans-serif;
  font-size: 22.500px;
  color: #111;
  position: relative;
  top: -1px;
}
.cand.sym .word {
  margin: 0 0 8px;
  font-family: "Liberation Sans", sans-serif;
  font-size: 20px;
}
.pager {
  display: flex;
  align-items: center;
  justify-content: space-between;
  box-sizing: border-box;
  width: 81px;
  margin-left: auto;
  padding: 0 13px;
  border-left: 1px solid #dcdcdc;
  border-right: 1px solid #dcdcdc;
}
.emoji {
  display: flex;
  align-items: center;
  justify-content: center;
  width: 60px;
}
.red-box {
  position: absolute;
  left: 225px;
  top: 360px;
  box-sizing: border-box;
  width: 269px;
  height: 203px;
  border: 7px solid #ff3b3b;
}

.vscroll {
  display: flex;
  flex-direction: column;
  flex: none;
  box-sizing: border-box;
  width: 21px;
  padding: 2px 1px 4px 1px;
  background: #dcdcdc;
}
.sbtn {
  display: flex;
  align-items: center;
  justify-content: center;
  flex: none;
  box-sizing: border-box;
  width: 18px;
  height: 18px;
  border: 1px solid #ababab;
  background: #fff;
}
.vthumb {
  flex: none;
  box-sizing: border-box;
  width: 18px;
  height: 85px;
  margin-top: 62px;
  border: 1px solid #ababab;
  background: #fff;
}
.sbtn.bottom {
  margin-top: auto;
}
.hscroll {
  display: flex;
  align-items: center;
  flex: none;
  height: 19px;
  background: #d8d8d8;
  border-top: 1px solid #c8c8c8;
  box-sizing: border-box;
}
.sbtn.h.first {
  margin-left: 2px;
}
.hthumb {
  box-sizing: border-box;
  width: 729px;
  height: 18px;
  margin-left: 201px;
  border: 1px solid #ababab;
  background: #fff;
}
.sbtn.h.last {
  margin-left: auto;
  margin-right: 24px;
}

/* status bar */
.status {
  position: relative;
  display: flex;
  align-items: center;
  flex: none;
  box-sizing: border-box;
  height: 27px;
  padding-left: 10px;
  border-top: 1px solid #c6c6c6;
  background: #f2f2f2;
  color: #444;
  font-size: 15px;
  white-space: nowrap;
}
.st.page { width: 129px; }
.st.pos { width: 129px; }
.st.count { width: 67px; }
.proof { margin-right: 22px; }
.st-right {
  display: flex;
  align-items: center;
  height: 100%;
  margin-left: auto;
  padding-right: 11px;
}
.view-on {
  display: flex;
  align-items: center;
  justify-content: center;
  width: 50px;
  height: 100%;
  background: #c6c6c6;
}
.zoom-btn {
  width: 10px;
  text-align: center;
  font-size: 17px;
  line-height: 17px;
}
.slider {
  position: relative;
  width: 124px;
  height: 1px;
  background: #a0a0a0;
}
.tick {
  position: absolute;
  left: 62px;
  top: -4px;
  width: 1px;
  height: 9px;
  background: #a0a0a0;
}
.knob {
  position: absolute;
  left: 114px;
  top: -7px;
  width: 6px;
  height: 15px;
  background: #555;
}
.pct {
  font-size: 15px;
  width: 40px;
}
.taskline {
  flex: none;
  height: 2px;
  background: linear-gradient(90deg, #15303f 433px, #c8702a 433px, #c8702a 495px, #15303f 495px);
}

/* floating language bar */
.ime-bar {
  position: absolute;
  left: 1221px;
  top: 945px;
  display: flex;
  align-items: center;
  gap: 16px;
  box-sizing: border-box;
  width: 145px;
  height: 39px;
  padding-left: 8px;
  background: #f2f2f2;
}
.grip {
  width: 2px;
  height: 20px;
  border-left: 1px solid #aaa;
  border-right: 1px solid #aaa;
}
.ime-zh {
  font-family: "Noto Sans CJK SC", sans-serif;
  font-size: 24px;
  line-height: 1;
  color: #111;
}

.watermark {
  position: absolute;
  left: 1472px;
  top: 827px;
  pointer-events: none;
  color: #fff;
  -webkit-text-stroke: 1.500px #e0e0e0;
}
.wm-top {
  display: flex;
  align-items: flex-start;
  height: 110px;
}
.wm-bai {
  width: 118px;
  margin-top: 38px;
  font-size: 80px;
  font-weight: 700;
  line-height: 80px;
}
.wm-cn {
  margin: 44px 0 0 3px;
  font-family: "Noto Sans CJK SC", sans-serif;
  font-size: 58px;
  font-weight: 700;
  line-height: 66px;
}
.wm-url {
  margin: 8px 0 0 3px;
  font-size: 42px;
  line-height: 44px;
}
</style>
